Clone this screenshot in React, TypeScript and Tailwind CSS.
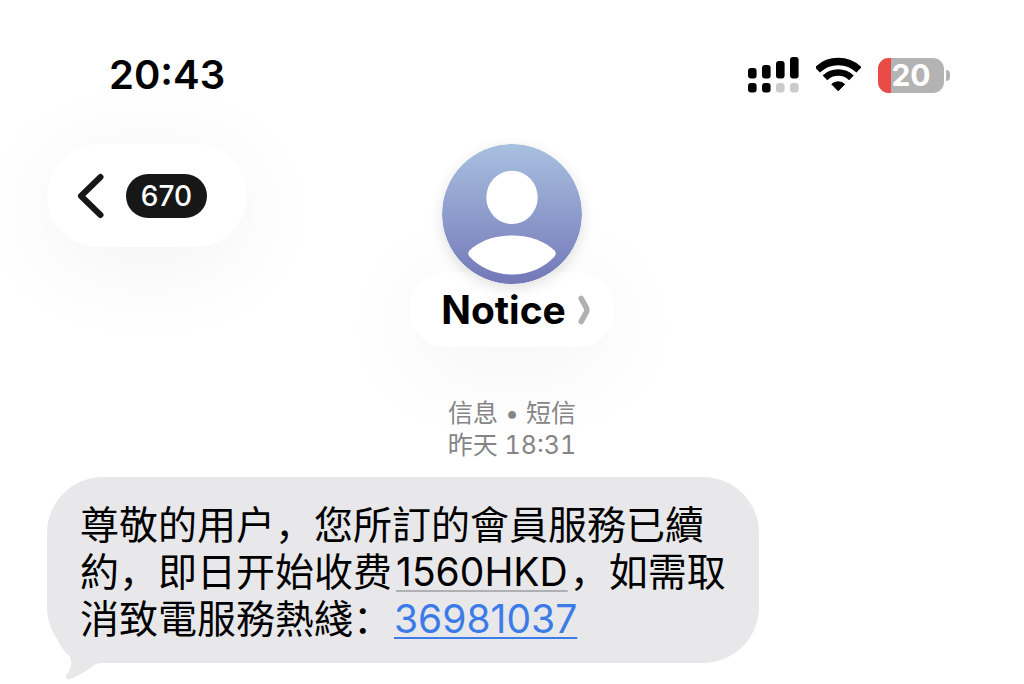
import type { ReactNode } from "react";

const SIGNAL_BARS = [
  { x: 0, y: 11, active: true },
  { x: 14, y: 8, active: true },
  { x: 28, y: 4, active: false },
  { x: 42, y: 0, active: false },
];

function SignalIcon() {
  return (
    <svg className="w-[51px] h-[36px]" viewBox="0 0 51 36" aria-hidden="true">
      {SIGNAL_BARS.map((bar) => (
        <g key={bar.x}>
          <rect x={bar.x} y={bar.y} width="8.6" height={21.5 - bar.y} rx="3" fill="#000" />
          <rect x={bar.x} y="26" width="8.6" height="9.4" rx="3" fill={bar.active ? "#000" : "#cbcbcb"} />
        </g>
      ))}
    </svg>
  );
}

function WifiIcon() {
  return (
    <svg className="w-[45px] h-[36px]" viewBox="0 0 45 36" fill="none" stroke="#000" aria-hidden="true">
      <path d="M1.4 12.9A30 30 0 0 1 43 12.9" strokeWidth="7.4" />
      <path d="M9 20.8A19 19 0 0 1 35.4 20.8" strokeWidth="6.6" />
      <path d="M22.2 33.8L15.8 27.2A9.8 9.8 0 0 1 28.6 27.2Z" fill="#000" strokeWidth="1" strokeLinejoin="round" />
    </svg>
  );
}

function Battery({ level }: { level: number }) {
  return (
    <div className="flex items-center gap-[2px]">
      <div className="relative flex h-[35px] w-[66px] items-center justify-center overflow-hidden rounded-[11px] bg-[#b3b3b3]">
        <div className="absolute inset-y-0 left-0 bg-[#eb4b47]" style={{ width: `${level}%` }} />
        <span className="relative text-[30px] leading-none font-bold text-white">{level}</span>
      </div>
      <div className="h-[11px] w-1 rounded-r-full bg-[#b3b3b3]" />
    </div>
  );
}

function StatusBar() {
  return (
    <div className="flex items-center justify-between pt-[50px] pr-[74px] pl-[109px]">
      <time className="text-[40px] leading-[50px] font-semibold">20:43</time>
      <div className="flex items-center gap-[17px]">
        <SignalIcon />
        <WifiIcon />
        <Battery level={20} />
      </div>
    </div>
  );
}

function Avatar() {
  return (
    <svg className="relative z-10 size-[140px] rounded-full shadow-[0_4px_14px_rgba(0,0,0,0.12)]" viewBox="0 0 140 140" aria-hidden="true">
      <defs>
        <linearGradient id="avatar-fill" x1="0" y1="0" x2="0" y2="1">
          <stop offset="0" stopColor="#a9c0e0" />
          <stop offset="1" stopColor="#7378b8" />
        </linearGradient>
      </defs>
      <circle cx="70" cy="70" r="70" fill="url(#avatar-fill)" />
      <ellipse cx="70" cy="53.4" rx="25.7" ry="26.7" fill="#fff" />
      <path d="M27.5 106.5C37 97 52 91.4 70 91.4S103 97 112.5 106.5Q115 109.5 112.5 112.5C103 123 88 130.5 70 130.5S37 123 27.5 112.5Q25 109.5 27.5 106.5Z" fill="#fff" />
    </svg>
  );
}

function Header() {
  return (
    <header className="grid grid-cols-[1fr_auto_1fr] items-start px-[47px] pt-11">
      <button
        type="button"
        aria-label="返回"
        className="flex h-[103px] w-[200px] items-center gap-[22px] rounded-full bg-white pl-[30px] shadow-[0_16px_100px_rgba(0,0,0,0.06)]"
      >
        <svg className="h-[46px] w-[27px]" viewBox="0 0 27 46" fill="none" stroke="#171717" strokeWidth="6" strokeLinecap="round" strokeLinejoin="round" aria-hidden="true">
          <path d="M23.5 4L4 23L23.5 42" />
        </svg>
        <span className="flex h-11 w-[81px] items-center justify-center rounded-full bg-[#171717] text-[28px] font-medium text-white">
          670
        </span>
      </button>

      <div className="flex flex-col items-center">
        <Avatar />
        <button
          type="button"
          className="-mt-3 flex h-[75px] items-center gap-3 rounded-full bg-white pr-6 pl-8 shadow-[0_16px_100px_rgba(0,0,0,0.06)]"
        >
          <span className="text-[39px] leading-none font-bold">Notice</span>
          <svg className="h-[30px] w-[13px]" viewBox="0 0 13 30" fill="none" stroke="#b0b0b0" strokeWidth="5.6" strokeLinecap="round" strokeLinejoin="round" aria-hidden="true">
            <path d="M3.2 3.5L8.2 12.5Q9.4 15 8.2 17.5L3.2 26.5" />
          </svg>
        </button>
      </div>
    </header>
  );
}

function Bubble({ children }: { children: ReactNode }) {
  return (
    <div className="relative max-w-[712px] rounded-[56px] bg-[#e8e8ea] pt-[24px] pr-7 pb-[21px] pl-[33px]">
      <svg className="absolute top-[158px] left-[6px] h-[46px] w-[54px]" viewBox="0 0 54 46" fill="#e8e8ea" aria-hidden="true">
        <path d="M3 0C6 10 11 16 16 21C19 25 19 30 16 36Q14 39 13 41Q13 45 17 44C28 40 36 34 41 30Q44 28 50 28L50 0Z" />
      </svg>
      <p className="relative text-[39px] leading-[47px]">{children}</p>
    </div>
  );
}

export default function App() {
  return (
    <div className="min-h-screen overflow-hidden bg-white font-['Inter','Noto_Sans_CJK_SC',sans-serif] text-black">
      <StatusBar />
      <Header />
      <main className="px-[47px] pb-5">
        <div className="pt-[50px] pb-4 text-center text-[25px] leading-8 text-[#858588]">
          <p>信息 • 短信</p>
          <p className="tabular-nums">昨天 18:31</p>
        </div>
        <Bubble>
          尊敬的用户，您所訂的會員服務已續約，即日开始收费
          <span className="mr-0.5 ml-1 underline decoration-[#b0b0b2] decoration-2 underline-offset-4">1560HKD</span>
          ，如需取消致電服務熱綫：
          <a href="tel:36981037" className="ml-0.5 text-[#3b7be8] underline decoration-2 underline-offset-4">36981037</a>
        </Bubble>
      </main>
    </div>
  );
}
